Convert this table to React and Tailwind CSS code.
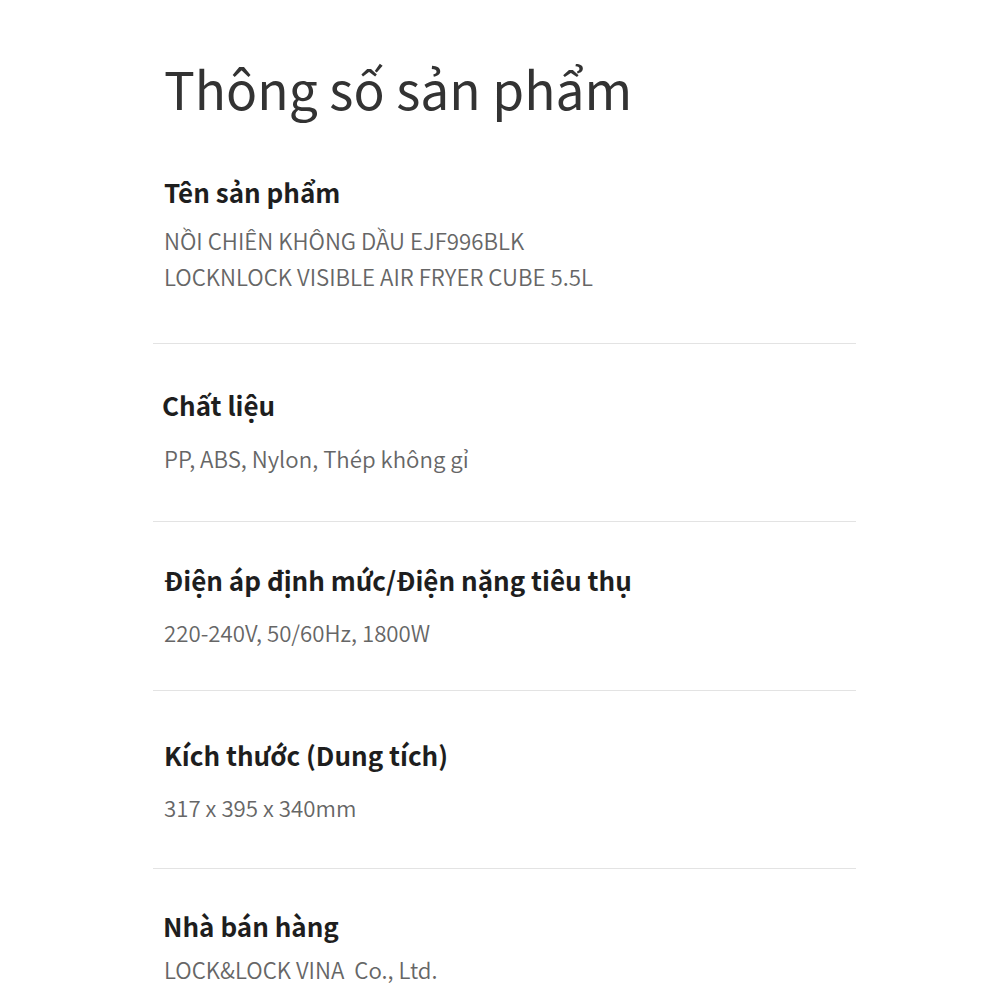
const SPECS = [
  { label: 'Chất liệu', value: ['PP, ABS, Nylon, Thép không gỉ'], pad: 'pt-[41px] pb-[45px]', hx: 'px-[9px]', gap: 'mt-[15px]' },
  { label: 'Điện áp định mức/Điện nặng tiêu thụ', value: ['220-240V, 50/60Hz, 1800W'], pad: 'pt-[38px] pb-[40px]', hx: 'px-[11px]', gap: 'mt-[14px]' },
  { label: 'Kích thước (Dung tích)', value: ['317 x 395 x 340mm'], pad: 'pt-[44px] pb-[43px]', hx: 'px-[11px]', gap: 'mt-[14px]' },
]

function SpecRow({ label, value, pad, hx, gap }) {
  return (
    <div className={`border-t border-[#e3e3e3] ${pad}`}>
      <h3 className={`${hx} text-[26px] font-bold leading-[40px] text-[#1e1e1e]`}>{label}</h3>
      <div className={`${gap} px-[11px] text-[22.25px] font-[350] leading-[36px] text-[#666]`}>
        {value.map((v, i) => <p key={i}>{v}</p>)}
      </div>
    </div>
  )
}

export default function App() {
  return (
    <div className="min-h-[1000px] bg-white" style={{ fontFamily: '"Noto Sans CJK KR", "Noto Sans", sans-serif' }}>
      <div className="ml-[153px] w-[703px] pt-[51px]">
        <h1 className="px-[11px] text-[51.5px] font-normal leading-[74px] text-[#333]">Thông số sản phẩm</h1>

        <div className="pt-[47px] pb-[49px]">
          <h3 className="px-[11px] text-[26px] font-bold leading-[40px] text-[#1e1e1e]">Tên sản phẩm</h3>
          <div className="mt-[10px] px-[11px] text-[22.25px] font-[350] leading-[36px] text-[#666]">
            <p>NỒI CHIÊN KHÔNG DẦU EJF996BLK</p>
            <p>LOCKNLOCK VISIBLE AIR FRYER CUBE 5.5L</p>
          </div>
        </div>

        {SPECS.map(s => <SpecRow key={s.label} {...s} />)}

        <div className="border-t border-[#e3e3e3] pt-[37px]">
          <h3 className="px-[10px] text-[26px] font-bold leading-[40px] text-[#1e1e1e]">Nhà bán hàng</h3>
          <div className="mt-[5px] px-[11px] text-[22.25px] font-[350] leading-[36px] text-[#666]">
            <p className="whitespace-pre">LOCK&amp;LOCK VINA  Co., Ltd.</p>
          </div>
        </div>
      </div>
    </div>
  )
}
